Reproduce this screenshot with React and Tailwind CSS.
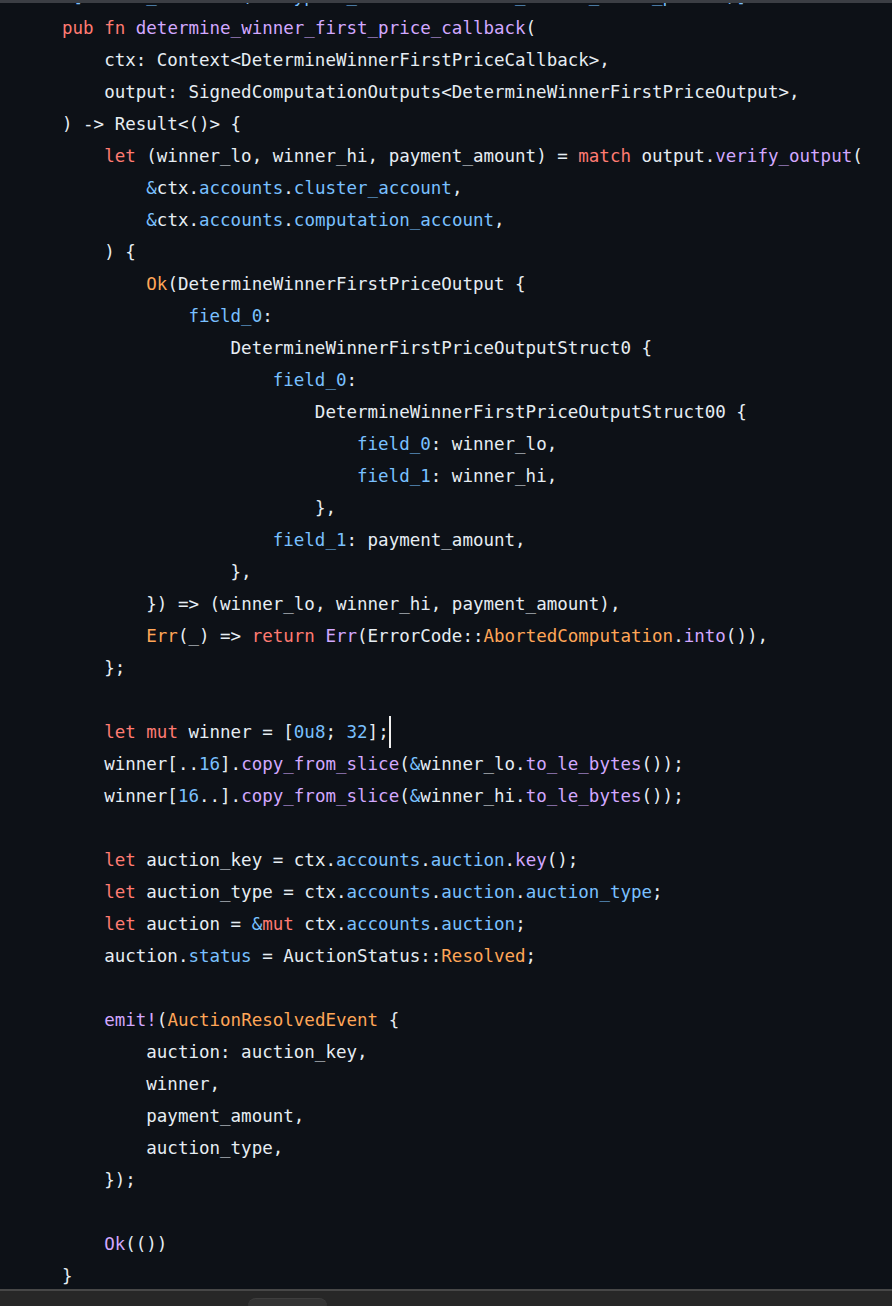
const K = ({ children }) => <span className="text-[#ff7b72]">{children}</span>;
const F = ({ children }) => <span className="text-[#d2a8ff]">{children}</span>;
const P = ({ children }) => <span className="text-[#79c0ff]">{children}</span>;
const C = ({ children }) => <span className="text-[#ffa657]">{children}</span>;

const lines = [
  <P>#[arcium_callback(encrypted_ix = "determine_winner_first_price")]</P>,
  <><K>pub</K> <K>fn</K> <F>determine_winner_first_price_callback</F>(</>,
  <>    ctx: Context&lt;DetermineWinnerFirstPriceCallback&gt;,</>,
  <>    output: SignedComputationOutputs&lt;DetermineWinnerFirstPriceOutput&gt;,</>,
  <>) -&gt; Result&lt;()&gt; {"{"}</>,
  <>    <K>let</K> (winner_lo, winner_hi, payment_amount) = <K>match</K> output.<F>verify_output</F>(</>,
  <>        <P>&amp;</P>ctx.<P>accounts</P>.<P>cluster_account</P>,</>,
  <>        <P>&amp;</P>ctx.<P>accounts</P>.<P>computation_account</P>,</>,
  <>    ) {"{"}</>,
  <>        <C>Ok</C>(DetermineWinnerFirstPriceOutput {"{"}</>,
  <>            <P>field_0</P>:</>,
  <>                DetermineWinnerFirstPriceOutputStruct0 {"{"}</>,
  <>                    <P>field_0</P>:</>,
  <>                        DetermineWinnerFirstPriceOutputStruct00 {"{"}</>,
  <>                            <P>field_0</P>: winner_lo,</>,
  <>                            <P>field_1</P>: winner_hi,</>,
  <>                        {"},"}</>,
  <>                    <P>field_1</P>: payment_amount,</>,
  <>                {"},"}</>,
  <>        {"})"} =&gt; (winner_lo, winner_hi, payment_amount),</>,
  <>        <C>Err</C>(_) =&gt; <K>return</K> <F>Err</F>(ErrorCode::<C>AbortedComputation</C>.<F>into</F>()),</>,
  <>    {"};"}</>,
  "",
  <>    <K>let</K> <K>mut</K> winner = [<P>0u8</P>; <P>32</P>];<span className="inline-block w-[2px] h-[32px] align-top bg-[#f0f0f0]"></span></>,
  <>    winner[..<P>16</P>].<F>copy_from_slice</F>(<P>&amp;</P>winner_lo.<F>to_le_bytes</F>());</>,
  <>    winner[<P>16</P>..].<F>copy_from_slice</F>(<P>&amp;</P>winner_hi.<F>to_le_bytes</F>());</>,
  "",
  <>    <K>let</K> auction_key = ctx.<P>accounts</P>.<P>auction</P>.<F>key</F>();</>,
  <>    <K>let</K> auction_type = ctx.<P>accounts</P>.<P>auction</P>.<P>auction_type</P>;</>,
  <>    <K>let</K> auction = <P>&amp;</P><K>mut</K> ctx.<P>accounts</P>.<P>auction</P>;</>,
  <>    auction.<P>status</P> = AuctionStatus::<C>Resolved</C>;</>,
  "",
  <>    <F>emit!</F>(<C>AuctionResolvedEvent</C> {"{"}</>,
  <>        auction: auction_key,</>,
  <>        winner,</>,
  <>        payment_amount,</>,
  <>        auction_type,</>,
  <>    {"});"}</>,
  "",
  <>    <F>Ok</F>(())</>,
  <>{"}"}</>,
];

export default function App() {
  return (
    <div className="w-[892px] h-[1306px] bg-[#0d1117] overflow-hidden flex flex-col">
      <div className="h-[3px] bg-[#3b3e44] shrink-0"></div>
      <div className="h-[1286px] overflow-hidden shrink-0">
        <div
          className="mt-[-23px] pl-[62px] text-[17.5px] text-[#e6edf3]"
          style={{ fontFamily: '"DejaVu Sans Mono", "Liberation Mono", monospace' }}
        >
          {lines.map((line, i) => (
            <div key={i} className="h-[32px] leading-[32px] whitespace-pre">
              {line === "" ? " " : line}
            </div>
          ))}
        </div>
      </div>
      <div className="h-[2px] bg-[#474747] shrink-0"></div>
      <div className="flex-1 bg-[#272727]">
        <div className="ml-[248px] mt-[7px] w-[79px] h-[10px] rounded-t-[8px] bg-[#343434] border-t border-[#3e3e3e]"></div>
      </div>
    </div>
  );
}
